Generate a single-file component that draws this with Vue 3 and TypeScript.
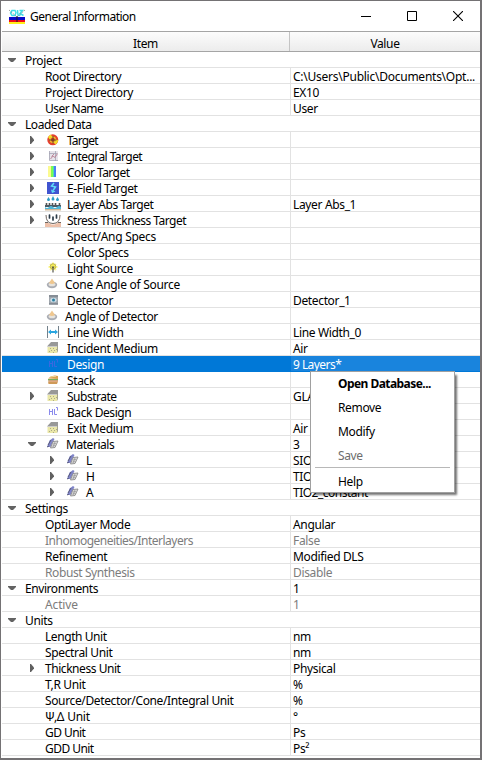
<script setup lang="ts">
interface Row {
  label: string
  value?: string
  level: number
  arrow?: 'open' | 'closed'
  icon?: string
  section?: boolean
  muted?: boolean
  selected?: boolean
  tight?: number
  track?: number
  valueTrack?: number
}

const BASE_TRACK = -0.35

const spacing = (extra?: number) =>
  extra ? { letterSpacing: `${BASE_TRACK + extra}px` } : undefined

const rows: Row[] = [
  { label: 'Project', level: 0, arrow: 'open', section: true },
  { label: 'Root Directory', value: 'C:\\Users\\Public\\Documents\\Opt...', level: 1, valueTrack: 0.1 },
  { label: 'Project Directory', value: 'EX10', level: 1 },
  { label: 'User Name', value: 'User', level: 1, track: -0.2 },
  { label: 'Loaded Data', level: 0, arrow: 'open', section: true, track: -0.1 },
  { label: 'Target', level: 1, arrow: 'closed', icon: 'target', track: -0.5 },
  { label: 'Integral Target', level: 1, arrow: 'closed', icon: 'integral', track: -0.2 },
  { label: 'Color Target', level: 1, arrow: 'closed', icon: 'color', track: -0.2 },
  { label: 'E-Field Target', level: 1, arrow: 'closed', icon: 'efield', track: -0.04 },
  { label: 'Layer Abs Target', value: 'Layer Abs_1', level: 1, arrow: 'closed', icon: 'layerabs', track: -0.1 },
  { label: 'Stress Thickness Target', level: 1, arrow: 'closed', icon: 'stress', track: -0.17 },
  { label: 'Spect/Ang Specs', level: 1, icon: 'blank', track: 0.08 },
  { label: 'Color Specs', level: 1, icon: 'blank' },
  { label: 'Light Source', level: 1, icon: 'bulb' },
  { label: 'Cone Angle of Source', level: 1, icon: 'cone', tight: 2, track: 0.07 },
  { label: 'Detector', value: 'Detector_1', level: 1, icon: 'detector' },
  { label: 'Angle of Detector', level: 1, icon: 'cone', tight: 2 },
  { label: 'Line Width', value: 'Line Width_0', level: 1, icon: 'linewidth' },
  { label: 'Incident Medium', value: 'Air', level: 1, icon: 'medium' },
  { label: 'Design', value: '9 Layers*', level: 1, icon: 'design', selected: true, valueTrack: -0.2 },
  { label: 'Stack', level: 1, icon: 'stack' },
  { label: 'Substrate', value: 'GLASS', level: 1, arrow: 'closed', icon: 'medium', track: -0.15 },
  { label: 'Back Design', level: 1, icon: 'design', track: -0.08 },
  { label: 'Exit Medium', value: 'Air', level: 1, icon: 'medium' },
  { label: 'Materials', value: '3', level: 1, arrow: 'open', icon: 'material', tight: 1, track: -0.1 },
  { label: 'L', value: 'SIO2', level: 2, arrow: 'closed', icon: 'material', tight: 1 },
  { label: 'H', value: 'TIO2', level: 2, arrow: 'closed', icon: 'material', tight: 1 },
  { label: 'A', value: 'TIO2_constant', level: 2, arrow: 'closed', icon: 'material', tight: 1, valueTrack: -0.15 },
  { label: 'Settings', level: 0, arrow: 'open', section: true },
  { label: 'OptiLayer Mode', value: 'Angular', level: 1, track: -0.02 },
  { label: 'Inhomogeneities/Interlayers', value: 'False', level: 1, muted: true, track: -0.15 },
  { label: 'Refinement', value: 'Modified DLS', level: 1, track: 0.05 },
  { label: 'Robust Synthesis', value: 'Disable', level: 1, muted: true, track: -0.05 },
  { label: 'Environments', value: '1', level: 0, arrow: 'open', track: -0.08 },
  { label: 'Active', value: '1', level: 1, muted: true, track: 0.2 },
  { label: 'Units', level: 0, arrow: 'open', section: true },
  { label: 'Length Unit', value: 'nm', level: 1, track: -0.08 },
  { label: 'Spectral Unit', value: 'nm', level: 1 },
  { label: 'Thickness Unit', value: 'Physical', level: 1, arrow: 'closed', track: -0.1 },
  { label: 'T,R Unit', value: '%', level: 1 },
  { label: 'Source/Detector/Cone/Integral Unit', value: '%', level: 1, track: -0.02 },
  { label: 'Ψ,Δ Unit', value: '°', level: 1, track: 0.1 },
  { label: 'GD Unit', value: 'Ps', level: 1, track: -0.2 },
  { label: 'GDD Unit', value: 'Ps²', level: 1, track: -0.2 },
]
</script>

<template>
  <div class="window">
    <header class="titlebar">
      <svg class="logo" width="16" height="16" viewBox="0 0 16 16">
        <path d="M3 1.500h3l1 2-1 3H3L1.500 4zM8.500 1l.5 5 2.500.5M10.500 1.500h3l-2.500 3 3.500 2" fill="none" stroke="#3fdde8" stroke-width="1.500" />
        <path d="M0 1l8 7 8-7" fill="none" stroke="#888" stroke-width=".8" stroke-dasharray="1.500 1" />
        <path d="M0 8h16v3H0z" fill="#0808c8" />
        <path d="M0 11h16v2H0z" fill="#f00a18" />
        <path d="M0 13h16v2H0z" fill="#ffef19" />
        <path d="M8 7v6" stroke="#151530" />
      </svg>
      <h1>General Information</h1>
      <div class="controls">
        <svg width="10" height="10" viewBox="0 0 10 10"><path d="M0 5.500h10" stroke="#000" /></svg>
        <svg width="10" height="10" viewBox="0 0 10 10"><path d="M.5.5h9v9h-9z" fill="none" stroke="#000" /></svg>
        <svg width="10" height="10" viewBox="0 0 10 10"><path d="M0 0l10 10M10 0L0 10" stroke="#000" stroke-width="1.100" /></svg>
      </div>
    </header>
    <div class="heading"><div class="name">Item</div><div class="val">Value</div></div>
    <div class="tree">
      <div v-for="(row, i) in rows" :key="i" class="row" :class="{ section: row.section, muted: row.muted, selected: row.selected }">
        <div class="cell" :class="'level' + row.level">
          <span class="arrow">
            <svg v-if="row.arrow === 'open'" width="8" height="5" viewBox="0 0 8 5"><path d="M0 0h8v1L5 4H3L0 1z" fill="#636363" /></svg>
            <svg v-if="row.arrow === 'closed'" width="4" height="8" viewBox="0 0 4 8"><path d="M0 0h1l3 3.500v1L1 8H0z" fill="#606060" /></svg>
          </span>
          <svg v-if="row.icon" class="icon" width="17" height="16" viewBox="0 0 17 16">
            <g v-if="row.icon === 'target'">
              <circle cx="7.800" cy="7.800" r="5.500" fill="#e5402f" />
              <path d="M3 5l2.500-2.500L8 5 5 8zM8 10.500l3-3 2.500 1-2.500 4z" fill="#f4df26" />
              <circle cx="7.800" cy="7.800" r="3.200" fill="#f3c42c" />
              <circle cx="7.800" cy="7.800" r="2" fill="#d13527" />
              <path d="M8 4v7.500M4 8h7.500" stroke="#5e4a25" stroke-width=".9" />
            </g>
            <g v-else-if="row.icon === 'integral'">
              <path d="M4 3h9v9H4z" fill="#e6e3ea" />
              <path d="M4.500 3v9.500H13M4 5.500h8M10.500 3v10" fill="none" stroke="#a4a5b4" stroke-width=".8" />
              <path d="M5.500 11l2.500-3 2 1.500 2.500-4M6.500 8.500L9 6" fill="none" stroke="#b97f93" stroke-width=".9" />
            </g>
            <g v-else-if="row.icon === 'color'">
              <path d="M3 2h3v11H3z" fill="#fbfa90" />
              <path d="M6 2h2v11H6z" fill="#7ffb50" />
              <path d="M8 2h1v11H8z" fill="#4ae0b0" />
              <path d="M9 2h2v11H9z" fill="#4a80f4" />
            </g>
            <g v-else-if="row.icon === 'efield'">
              <path d="M2 2h12v12H2z" fill="#4054d0" />
              <path d="M9 3L6.500 6l4 1L8 10.500" fill="none" stroke="#60dcf8" stroke-width="1.500" />
              <path d="M6 9.500l1 3.500 3.500-1.500z" fill="#60dcf8" />
            </g>
            <g v-else-if="row.icon === 'layerabs'">
              <path d="M3.500 1L5 3.500a1.500 1.500 0 1 1-3 0zM8 0l1.500 3a1.500 1.500 0 1 1-3 0zM12.500 1L14 3.500a1.500 1.500 0 1 1-3 0z" fill="#2b9cc6" />
              <path d="M1.500 7v3M4.500 7v3M7.500 7v3M10.500 7v3M14.500 7v3" stroke="#555" stroke-width="1.600" />
              <path d="M0 9h16v2H0z" fill="#4a5a64" />
              <path d="M0 11q2 2 4 0t4 0t4 0t4 0v2H0z" fill="#50b7d8" />
              <path d="M0 13h16v1.500H0z" fill="#d5b897" />
            </g>
            <g v-else-if="row.icon === 'stress'">
              <path d="M0 11h3.500l3 1.500h3l3-1.500H16v4H0z" fill="#edc0a9" />
              <path d="M1 3q0 8.500 7 8.500T15 3M0 10.500h3M13 10.500h3" fill="none" stroke="#6f6660" />
              <path d="M4.500 3v3M8 5v3M11.500 3v3" stroke="#2b3b48" stroke-width="1.700" stroke-linecap="round" />
            </g>
            <g v-else-if="row.icon === 'bulb'">
              <path d="M8 2.500v2M3.500 7h9M5 4l6 6M11 4l-6 6" stroke="#fff98c" stroke-width="2" />
              <circle cx="8" cy="6.500" r="2.800" fill="#f7ee58" stroke="#a39b4a" stroke-width=".7" />
              <path d="M7 6.500L8 8l1-1.500M8 8v4.500" fill="none" stroke="#55564a" stroke-width="1.200" />
            </g>
            <g v-else-if="row.icon === 'cone'">
              <ellipse cx="7" cy="8.800" rx="5.200" ry="3.400" fill="#a9acb3" />
              <ellipse cx="7" cy="8.500" rx="3.500" ry="1.800" fill="#e6e3dd" />
              <path d="M7 2.500L10 7q-3 2.200-6 0z" fill="#efc78f" />
            </g>
            <g v-else-if="row.icon === 'detector'">
              <path d="M4 3h9v9.500H4z" fill="#a0a6ad" />
              <path d="M4 4h9M4 12h9" stroke="#6d757e" />
              <ellipse cx="8.500" cy="8" rx="3.200" ry="2.300" fill="#cddde8" />
              <circle cx="8.500" cy="8" r="1.500" fill="#2b7f9f" />
            </g>
            <g v-else-if="row.icon === 'linewidth'">
              <path d="M2.500 2v12M13.500 2v12" stroke="#73818b" />
              <path d="M3 8l3-2.500V7h4V5.500L13 8l-3 2.500V9H6v1.500z" fill="#2aa6e0" />
            </g>
            <g v-else-if="row.icon === 'medium'">
              <path d="M2 6.500L6 2h7v4.500z" fill="#989898" />
              <path d="M2.500 7H12v6H2.500z" fill="#eae7a8" />
              <path d="M12 6h1v5l-1 2z" fill="#a5a48c" />
              <path d="M5 8h1v1H5zM8 8h1v1H8zM6 10h1v1H6zM9 10h1v1H9zM4 11h1v1H4zM8 12h1v1H8zM11 9h1v1h-1z" fill="#aaa98a" />
            </g>
            <g v-else-if="row.icon === 'design'" fill="none" :stroke="row.selected ? '#3a68e0' : '#8a8aec'">
              <path d="M4.500 5v6M7.500 5v6M5 7.500h2M9.500 5v5.500H12M11 3.500h1.500v3" />
            </g>
            <g v-else-if="row.icon === 'stack'">
              <path d="M3 6.500Q7 2.500 13 4v3z" fill="#d8a253" />
              <path d="M3 7h10v1.500H3z" fill="#79ad58" />
              <path d="M3.500 8.500H13v1H3.500z" fill="#d9704a" />
              <path d="M3 9.500h10l-1 2.500H3.500z" fill="#cf9a58" />
              <path d="M5 5l6-.8" stroke="#f2d9a0" />
            </g>
            <g v-else-if="row.icon === 'material'">
              <path d="M4.500 4.500L8 2l1.500 1L5.500 11H2z" fill="#7f84c8" />
              <path d="M3 9l3-5M2 11l2-1" stroke="#4f5168" stroke-width=".8" />
              <path d="M8 5.500l5-.5-3 6.500-4.500.5z" fill="#dedede" stroke="#808080" stroke-width=".8" />
              <path d="M8 8l3-.5M7.500 10l3-.5M10 6l-2 5" fill="none" stroke="#8a8a8a" stroke-width=".6" />
            </g>
          </svg>
          <span class="label" :class="row.tight ? 'tight' + row.tight : ''" :style="spacing(row.track)">{{ row.label }}</span>
        </div>
        <div class="value" :style="spacing(row.valueTrack)">{{ row.value }}</div>
      </div>
    </div>
    <nav class="menu">
      <div class="entry primary">Open Database...</div>
      <div class="entry">Remove</div>
      <div class="entry">Modify</div>
      <div class="entry off">Save</div>
      <hr />
      <div class="entry">Help</div>
    </nav>
  </div>
</template>

<style>
body { margin: 0; }
</style>

<style scoped>
.window {
  position: relative;
  box-sizing: border-box;
  width: 482px;
  height: 760px;
  overflow: hidden;
  background: #fff;
  border: solid #747274;
  border-width: 1px 2px 2px 1px;
  font: 12px/16px "Noto Sans", "Open Sans", sans-serif;
  letter-spacing: -0.35px;
  color: #000;
  white-space: nowrap;
}
.titlebar { display: flex; align-items: center; height: 30px; padding: 0 17px 0 8px; }
.logo { margin-top: 1px; }
h1 { margin: 1px 0 0 5px; font-size: 12px; font-weight: 400; line-height: 17px; letter-spacing: -0.5px; }
.controls { display: flex; gap: 36px; margin-left: auto; }
.heading {
  display: flex;
  box-sizing: border-box;
  height: 21px;
  margin-left: 1px;
  border: solid #a5a5a5;
  border-width: 1px 0;
  background: linear-gradient(#fcfcfc, #ececec);
  text-align: center;
  line-height: 23px;
}
.heading .name { box-sizing: border-box; width: 288px; border-right: 1px solid #c4c4c4; }
.heading .val { flex: 1; }
.tree { margin-left: 1px; }
.row { display: flex; height: 16px; box-sizing: border-box; border-bottom: 1px solid #e2e2e2; }
.cell { box-sizing: border-box; display: flex; width: 289px; height: 15px; border-right: 1px solid #e2e2e2; }
.section .cell { border-color: transparent; }
.level0 { padding-left: 5px; }
.level1 { padding-left: 25px; }
.level2 { padding-left: 45px; }
.arrow { display: flex; align-items: center; justify-content: center; width: 10px; height: 16px; margin-right: 8px; }
.icon { flex: none; margin: 0 5px 0 0; }
.label { flex: none; line-height: 17px; }
.tight1 { margin-left: -1px; }
.tight2 { margin-left: -2px; }
.value { flex: 1; padding-left: 2px; height: 15px; line-height: 17px; }
.muted { color: #7c7c7c; }
.selected { color: #fff; border-color: #0078d7; }
.selected .cell { background: #0078d7; border-color: #0078d7; }
.selected .value { background: #1984dd; }
.menu {
  position: absolute;
  left: 309px;
  top: 370px;
  box-sizing: border-box;
  width: 145px;
  height: 122px;
  background: #fff;
  border: 1px solid #a0a0a0;
  box-shadow: 3px 3px 2px -1px rgba(0, 0, 0, 0.55);
}
.entry { height: 24px; padding-left: 27px; line-height: 24px; }
.primary { font-weight: 700; letter-spacing: -0.55px; }
.off { color: #6d6d6d; }
hr { height: 1px; margin: -1px 4px 2px; border: 0; background: #b8b8b8; }
</style>
